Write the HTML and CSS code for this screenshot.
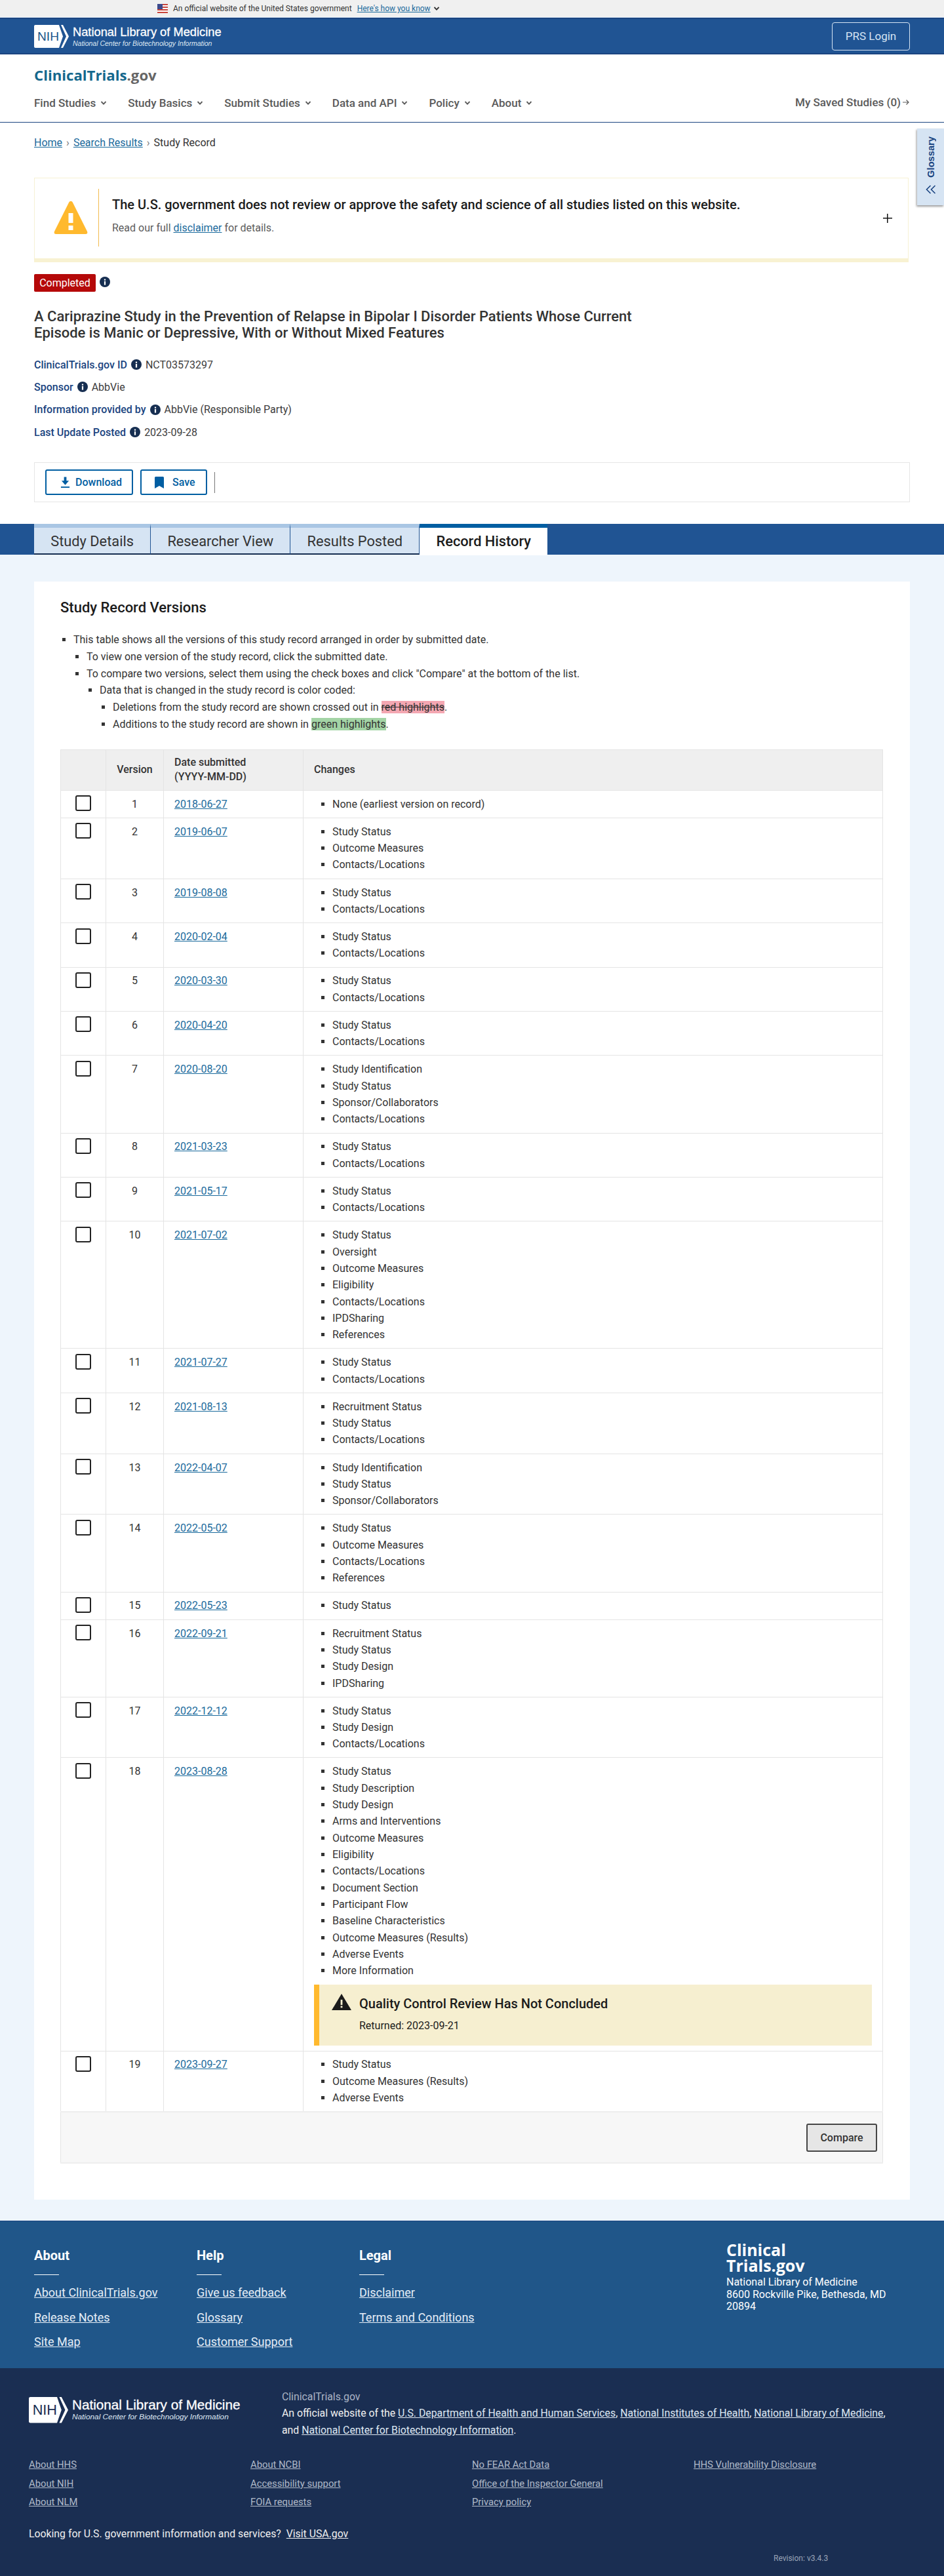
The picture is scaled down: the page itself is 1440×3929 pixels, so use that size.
FILE: index.html
```html
<!DOCTYPE html>
<html lang="en">
<head>
    <meta charset="UTF-8">
    <title>Record History | ClinicalTrials.gov</title>
    <link rel="stylesheet" href="styles.css">
</head>
<body>
    <svg class="sprite" width="0" height="0">
        <symbol id="info" viewBox="0 0 16 16"><circle cx="8" cy="8" r="8" fill="#162e51"/><rect x="6.900" y="7" width="2.200" height="5.600" fill="#fff"/><rect x="6.900" y="3.600" width="2.200" height="2.200" fill="#fff"/></symbol>
        <symbol id="caret" viewBox="0 0 10 10"><path d="M1.500 3l3.500 3.600L8.500 3" fill="none" stroke="currentColor" stroke-width="1.800"/></symbol>
    </svg>

    <div class="gov-banner">
        <svg class="flag" viewBox="0 0 16 14"><rect width="16" height="14" fill="#fff"/><path d="M0 0h16v2H0zM0 4h16v2H0zM0 8h16v2H0zM0 12h16v2H0z" fill="#c8443c"/><rect width="8" height="8" fill="#3c4a8c"/></svg>
        <span>An official website of the United States government</span>
        <a href="#">Here's how you know</a>
        <svg class="caret"><use href="#caret"/></svg>
    </div>

    <header class="nlm-header">
        <a class="nlm-logo" href="#">
            <svg class="nih-mark" viewBox="0 0 53 35"><path d="M2 0h36l6 17.500L38 35H2a2 2 0 0 1-2-2V2a2 2 0 0 1 2-2z" fill="#fff"/><path d="M41 0h3l9 17.500L44 35h-3l8-17.500z" fill="#fff"/><text x="5" y="24" font-family="Liberation Sans" font-size="19" fill="#20558a" textLength="33" lengthAdjust="spacingAndGlyphs">NIH</text></svg>
            <span class="nlm-name"><b>National Library of Medicine</b><i>National Center for Biotechnology Information</i></span>
        </a>
        <a class="prs-login" href="#">PRS Login</a>
    </header>

    <div class="site-header">
        <div class="site-logo">ClinicalTrials<span>.gov</span></div>
        <nav class="main-nav">
            <a href="#">Find Studies <svg class="caret"><use href="#caret"/></svg></a>
            <a href="#">Study Basics <svg class="caret"><use href="#caret"/></svg></a>
            <a href="#">Submit Studies <svg class="caret"><use href="#caret"/></svg></a>
            <a href="#">Data and API <svg class="caret"><use href="#caret"/></svg></a>
            <a href="#">Policy <svg class="caret"><use href="#caret"/></svg></a>
            <a href="#">About <svg class="caret"><use href="#caret"/></svg></a>
            <a class="saved" href="#">My Saved Studies (0)<svg viewBox="0 0 12 12"><path d="M1 6h9M6.500 2.500L10 6l-3.500 3.500" fill="none" stroke="currentColor" stroke-width="1.200"/></svg></a>
        </nav>
    </div>

    <button class="glossary">
        <span>Glossary</span>
        <svg viewBox="0 0 16 14"><path d="M7.500 1L1.500 7l6 6M14.500 1l-6 6 6 6" fill="none" stroke="#1a4480" stroke-width="1.600"/></svg>
    </button>

    <main class="top-section">
        <div class="breadcrumb">
            <a href="#">Home</a><i>›</i><a href="#">Search Results</a><i>›</i><span>Study Record</span>
        </div>

        <section class="disclaimer">
            <svg class="warn-icon" viewBox="0 0 52 52"><path d="M23 3c1.500-3 4.500-3 6 0l22 44c1 2.500 0 4-2.500 4h-45C1 51 0 49.500 1 47z" fill="#ffb92e"/><rect x="22.500" y="19" width="7" height="15" fill="#fff"/><rect x="22.500" y="38" width="7" height="7" fill="#fff"/></svg>
            <div class="disclaimer-text">
                <h3>The U.S. government does not review or approve the safety and science of all studies listed on this website.</h3>
                <p>Read our full <a href="#">disclaimer</a> for details.</p>
            </div>
            <span class="plus"></span>
        </section>

        <div class="status-row">
            <span class="status">Completed</span>
            <svg class="info"><use href="#info"/></svg>
        </div>

        <h1>A Cariprazine Study in the Prevention of Relapse in Bipolar I Disorder Patients Whose Current Episode is Manic or Depressive, With or Without Mixed Features</h1>

        <dl class="meta">
            <div><dt>ClinicalTrials.gov ID</dt><svg class="info"><use href="#info"/></svg><dd>NCT03573297</dd></div>
            <div><dt>Sponsor</dt><svg class="info"><use href="#info"/></svg><dd>AbbVie</dd></div>
            <div><dt>Information provided by</dt><svg class="info"><use href="#info"/></svg><dd>AbbVie (Responsible Party)</dd></div>
            <div><dt>Last Update Posted</dt><svg class="info"><use href="#info"/></svg><dd>2023-09-28</dd></div>
        </dl>

        <div class="toolbar">
            <button class="tool-btn download">
                <svg viewBox="0 0 16 18"><path d="M6 0h4v6h4l-6 7-6-7h4z" fill="#005ea2"/><rect x="1" y="15.500" width="14" height="2" fill="#005ea2"/></svg>
                Download
            </button>
            <button class="tool-btn save">
                <svg viewBox="0 0 14 18"><path d="M0 1.500A1.500 1.500 0 0 1 1.500 0h11A1.500 1.500 0 0 1 14 1.500V18l-7-4-7 4z" fill="#005ea2"/></svg>
                Save
            </button>
            <span class="tool-sep"></span>
        </div>
    </main>

    <div class="tab-band">
        <a class="tab" href="#">Study Details</a>
        <a class="tab" href="#">Researcher View</a>
        <a class="tab" href="#">Results Posted</a>
        <a class="tab active" href="#">Record History</a>
    </div>

    <div class="content-bg">
        <section class="card">
            <h2>Study Record Versions</h2>
            <ul class="help-list">
                <li>This table shows all the versions of this study record arranged in order by submitted date.
                    <ul>
                        <li>To view one version of the study record, click the submitted date.</li>
                        <li>To compare two versions, select them using the check boxes and click "Compare" at the bottom of the list.
                            <ul>
                                <li>Data that is changed in the study record is color coded:
                                    <ul>
                                        <li>Deletions from the study record are shown crossed out in <del>red highlights</del>.</li>
                                        <li>Additions to the study record are shown in <ins>green highlights</ins>.</li>
                                    </ul>
                                </li>
                            </ul>
                        </li>
                    </ul>
                </li>
            </ul>

            <table class="versions">
                <colgroup><col class="c-check"><col class="c-ver"><col class="c-date"><col class="c-changes"></colgroup>
                <thead>
                    <tr><th></th><th class="center">Version</th><th>Date submitted<br>(YYYY-MM-DD)</th><th>Changes</th></tr>
                </thead>
                <tbody>
                    <tr><td class="check"><input type="checkbox"></td><td class="center">1</td><td><a href="#">2018-06-27</a></td><td><ul><li>None (earliest version on record)</li></ul></td></tr>
                    <tr><td class="check"><input type="checkbox"></td><td class="center">2</td><td><a href="#">2019-06-07</a></td><td><ul><li>Study Status</li><li>Outcome Measures</li><li>Contacts/Locations</li></ul></td></tr>
                    <tr><td class="check"><input type="checkbox"></td><td class="center">3</td><td><a href="#">2019-08-08</a></td><td><ul><li>Study Status</li><li>Contacts/Locations</li></ul></td></tr>
                    <tr><td class="check"><input type="checkbox"></td><td class="center">4</td><td><a href="#">2020-02-04</a></td><td><ul><li>Study Status</li><li>Contacts/Locations</li></ul></td></tr>
                    <tr><td class="check"><input type="checkbox"></td><td class="center">5</td><td><a href="#">2020-03-30</a></td><td><ul><li>Study Status</li><li>Contacts/Locations</li></ul></td></tr>
                    <tr><td class="check"><input type="checkbox"></td><td class="center">6</td><td><a href="#">2020-04-20</a></td><td><ul><li>Study Status</li><li>Contacts/Locations</li></ul></td></tr>
                    <tr><td class="check"><input type="checkbox"></td><td class="center">7</td><td><a href="#">2020-08-20</a></td><td><ul><li>Study Identification</li><li>Study Status</li><li>Sponsor/Collaborators</li><li>Contacts/Locations</li></ul></td></tr>
                    <tr><td class="check"><input type="checkbox"></td><td class="center">8</td><td><a href="#">2021-03-23</a></td><td><ul><li>Study Status</li><li>Contacts/Locations</li></ul></td></tr>
                    <tr><td class="check"><input type="checkbox"></td><td class="center">9</td><td><a href="#">2021-05-17</a></td><td><ul><li>Study Status</li><li>Contacts/Locations</li></ul></td></tr>
                    <tr><td class="check"><input type="checkbox"></td><td class="center">10</td><td><a href="#">2021-07-02</a></td><td><ul><li>Study Status</li><li>Oversight</li><li>Outcome Measures</li><li>Eligibility</li><li>Contacts/Locations</li><li>IPDSharing</li><li>References</li></ul></td></tr>
                    <tr><td class="check"><input type="checkbox"></td><td class="center">11</td><td><a href="#">2021-07-27</a></td><td><ul><li>Study Status</li><li>Contacts/Locations</li></ul></td></tr>
                    <tr><td class="check"><input type="checkbox"></td><td class="center">12</td><td><a href="#">2021-08-13</a></td><td><ul><li>Recruitment Status</li><li>Study Status</li><li>Contacts/Locations</li></ul></td></tr>
                    <tr><td class="check"><input type="checkbox"></td><td class="center">13</td><td><a href="#">2022-04-07</a></td><td><ul><li>Study Identification</li><li>Study Status</li><li>Sponsor/Collaborators</li></ul></td></tr>
                    <tr><td class="check"><input type="checkbox"></td><td class="center">14</td><td><a href="#">2022-05-02</a></td><td><ul><li>Study Status</li><li>Outcome Measures</li><li>Contacts/Locations</li><li>References</li></ul></td></tr>
                    <tr><td class="check"><input type="checkbox"></td><td class="center">15</td><td><a href="#">2022-05-23</a></td><td><ul><li>Study Status</li></ul></td></tr>
                    <tr><td class="check"><input type="checkbox"></td><td class="center">16</td><td><a href="#">2022-09-21</a></td><td><ul><li>Recruitment Status</li><li>Study Status</li><li>Study Design</li><li>IPDSharing</li></ul></td></tr>
                    <tr><td class="check"><input type="checkbox"></td><td class="center">17</td><td><a href="#">2022-12-12</a></td><td><ul><li>Study Status</li><li>Study Design</li><li>Contacts/Locations</li></ul></td></tr>
                    <tr><td class="check"><input type="checkbox"></td><td class="center">18</td><td><a href="#">2023-08-28</a></td><td>
                        <ul><li>Study Status</li><li>Study Description</li><li>Study Design</li><li>Arms and Interventions</li><li>Outcome Measures</li><li>Eligibility</li><li>Contacts/Locations</li><li>Document Section</li><li>Participant Flow</li><li>Baseline Characteristics</li><li>Outcome Measures (Results)</li><li>Adverse Events</li><li>More Information</li></ul>
                        <div class="qc-box">
                            <svg viewBox="0 0 30 25"><path d="M15 0l15 25H0z" fill="#1b1b1b"/><rect x="13.600" y="9" width="2.800" height="8" fill="#f6efd0"/><rect x="13.600" y="18.500" width="2.800" height="2.800" fill="#f6efd0"/></svg>
                            <div>
                                <h4>Quality Control Review Has Not Concluded</h4>
                                <p>Returned: 2023-09-21</p>
                            </div>
                        </div>
                    </td></tr>
                    <tr><td class="check"><input type="checkbox"></td><td class="center">19</td><td><a href="#">2023-09-27</a></td><td><ul><li>Study Status</li><li>Outcome Measures (Results)</li><li>Adverse Events</li></ul></td></tr>
                </tbody>
                <tfoot>
                    <tr><td colspan="4"><button class="compare">Compare</button></td></tr>
                </tfoot>
            </table>
        </section>
    </div>

    <footer>
        <div class="footer-top">
            <div class="foot-col">
                <h5>About</h5>
                <a href="#">About ClinicalTrials.gov</a>
                <a href="#">Release Notes</a>
                <a href="#">Site Map</a>
            </div>
            <div class="foot-col">
                <h5>Help</h5>
                <a href="#">Give us feedback</a>
                <a href="#">Glossary</a>
                <a href="#">Customer Support</a>
            </div>
            <div class="foot-col">
                <h5>Legal</h5>
                <a href="#">Disclaimer</a>
                <a href="#">Terms and Conditions</a>
            </div>
            <div class="foot-address">
                <div class="foot-logo">Clinical<br>Trials.gov</div>
                <p>National Library of Medicine<br>8600 Rockville Pike, Bethesda, MD<br>20894</p>
            </div>
        </div>

        <div class="footer-bottom">
            <div class="official">
                <a class="nlm-logo" href="#">
                    <svg class="nih-mark" viewBox="0 0 53 35"><path d="M2 0h36l6 17.500L38 35H2a2 2 0 0 1-2-2V2a2 2 0 0 1 2-2z" fill="#fff"/><path d="M41 0h3l9 17.500L44 35h-3l8-17.500z" fill="#fff"/><text x="5" y="24" font-family="Liberation Sans" font-size="19" fill="#1a2e52" textLength="33" lengthAdjust="spacingAndGlyphs">NIH</text></svg>
                    <span class="nlm-name"><b>National Library of Medicine</b><i>National Center for Biotechnology Information</i></span>
                </a>
                <div class="official-text">
                    <div class="official-name">ClinicalTrials.gov</div>
                    <p>An official website of the <a href="#">U.S. Department of Health and Human Services</a>, <a href="#">National Institutes of Health</a>, <a href="#">National Library of Medicine</a>, and <a href="#">National Center for Biotechnology Information</a>.</p>
                </div>
            </div>
            <div class="agency-links">
                <div><a href="#">About HHS</a><a href="#">About NIH</a><a href="#">About NLM</a></div>
                <div><a href="#">About NCBI</a><a href="#">Accessibility support</a><a href="#">FOIA requests</a></div>
                <div><a href="#">No FEAR Act Data</a><a href="#">Office of the Inspector General</a><a href="#">Privacy policy</a></div>
                <div><a href="#">HHS Vulnerability Disclosure</a></div>
            </div>
            <div class="usa-line">Looking for U.S. government information and services? <a href="#">Visit USA.gov</a></div>
            <div class="revision">Revision: v3.4.3</div>
        </div>
    </footer>
</body>
</html>
```

FILE: styles.css
```css
* {
    box-sizing: border-box;
}

body {
    margin: 0;
    font-family: 'Roboto', sans-serif;
    font-size: 16px;
    color: #333;
    background: #fff;
    position: relative;
}

a {
    color: #1a6a9c;
}

.sprite {
    position: absolute;
}

.caret {
    width: 10px;
    height: 10px;
}

.info {
    width: 16px;
    height: 16px;
    flex: none;
}

/* Top banner */
.gov-banner {
    height: 27px;
    background: #f0f0f0;
    border-bottom: 1px solid #d6e4f3;
    display: flex;
    align-items: center;
    padding-left: 240px;
    font-size: 12px;
    color: #333;
}

.gov-banner .flag {
    width: 16px;
    height: 14px;
    margin-right: 8px;
}

.gov-banner a {
    margin-left: 8px;
    margin-right: 4px;
}

/* NLM header */
.nlm-header {
    height: 56px;
    background: #205493;
    border-top: 2px solid #1a4480;
    border-bottom: 2px solid #1a4480;
    display: flex;
    justify-content: space-between;
    align-items: center;
    padding: 0 52px;
}

.nlm-logo {
    display: flex;
    align-items: center;
    gap: 6px;
    color: #fff;
    text-decoration: none;
}

.nih-mark {
    width: 53px;
    height: 35px;
    flex: none;
}

.nlm-name {
    display: flex;
    flex-direction: column;
    font-family: 'Liberation Sans', sans-serif;
}

.nlm-name b {
    font-size: 18.300px;
    font-weight: 400;
    line-height: 22px;
    -webkit-text-stroke: 0.3px #fff;
}

.nlm-name i {
    font-size: 10.500px;
    line-height: 13px;
    color: #dfe8f2;
}

.prs-login {
    width: 119px;
    height: 43px;
    border: 1px solid #d6e4f3;
    border-radius: 4px;
    display: flex;
    align-items: center;
    justify-content: center;
    color: #d6e4f3;
    font-size: 17px;
    text-decoration: none;
}

/* Site header */
.site-header {
    height: 104px;
    padding: 16px 52px 0;
    border-bottom: 1px solid #1a4480;
}

.site-logo {
    font-family: 'Open Sans', sans-serif;
    font-weight: 700;
    font-size: 22.200px;
    line-height: 32px;
    color: #15688d;
}

.site-logo span {
    color: #666;
    font-weight: 700;
}

.main-nav {
    display: flex;
    gap: 32px;
    margin-top: 15px;
    align-items: center;
}

.main-nav a {
    color: #5a5a5a;
    font-size: 17px;
    font-weight: 500;
    text-decoration: none;
    display: flex;
    align-items: center;
    gap: 7px;
    line-height: 22px;
}

.main-nav .saved {
    margin-left: auto;
    gap: 2px;
    margin-top: -2px;
}

.main-nav .saved svg {
    width: 12px;
    height: 12px;
}

/* Glossary flyout */
.glossary {
    position: absolute;
    top: 196px;
    right: 0;
    width: 41px;
    height: 117px;
    padding: 12px 0 0;
    border: none;
    background: #d6e4f3;
    box-shadow: -1px 2px 3px rgba(0, 0, 0, 0.4);
    display: flex;
    flex-direction: column;
    align-items: center;
    justify-content: flex-start;
    gap: 11px;
}

.glossary span {
    writing-mode: vertical-rl;
    transform: rotate(180deg);
    font-family: 'Liberation Sans', sans-serif;
    font-weight: 700;
    font-size: 14.700px;
    color: #1a4480;
}

.glossary svg {
    width: 16px;
    height: 14px;
}

/* Top section */
.top-section {
    padding: 0 52px;
    height: 612px;
}

.breadcrumb {
    padding-top: 20px;
    line-height: 22px;
    color: #333;
    display: flex;
    align-items: center;
}

.breadcrumb i {
    font-style: normal;
    margin: 0 6px;
    color: #777;
}

.disclaimer {
    margin-top: 42px;
    width: 1334px;
    height: 129px;
    border: 1px solid #f6f1d4;
    border-bottom: 6px solid #f8f2d2;
    display: flex;
    align-items: center;
    padding-left: 29px;
    padding-bottom: 2px;
    position: relative;
}

.warn-icon {
    width: 52px;
    height: 52px;
    margin-right: 16px;
    flex: none;
}

.disclaimer-text {
    border-left: 1px solid #f2bb4f;
    height: 88px;
    padding-left: 20px;
    padding-top: 11px;
}

.disclaimer-text h3 {
    margin: 0;
    font-size: 20px;
    font-weight: 500;
    line-height: 26px;
    color: #1b1b1b;
}

.disclaimer-text p {
    margin: 11px 0 0;
    line-height: 24px;
    color: #5c5c5c;
}

.plus {
    position: absolute;
    left: 1294px;
    top: 54px;
    width: 14px;
    height: 14px;
    background: linear-gradient(#111, #111) center / 14px 1.500px no-repeat, linear-gradient(#111, #111) center / 1.500px 14px no-repeat;
}

.status-row {
    margin-top: 18px;
    display: flex;
    align-items: flex-start;
    gap: 6px;
}

.status {
    background: #b50909;
    color: #fff;
    height: 27px;
    width: 94px;
    border-radius: 2px;
    display: flex;
    align-items: center;
    justify-content: center;
}

.status-row .info {
    margin-top: 4px;
}

h1 {
    margin: 25px 0 0;
    width: 960px;
    font-size: 22px;
    font-weight: 500;
    line-height: 25px;
    color: #333;
}

.meta {
    margin: 19px 0 0;
}

.meta div {
    display: flex;
    align-items: center;
    gap: 6px;
    height: 34.300px;
}

.meta dt {
    color: #1a4480;
    font-weight: 500;
}

.meta dd {
    margin: 0;
    color: #3d3d3d;
}

.toolbar {
    margin-top: 29px;
    height: 61px;
    border: 1px solid #e6e6e6;
    display: flex;
    align-items: center;
    padding-left: 16px;
    gap: 11px;
}

.tool-btn {
    height: 39px;
    background: #fff;
    border: 2px solid #005ea2;
    border-radius: 3px;
    color: #005ea2;
    font: 500 16px 'Roboto', sans-serif;
    display: flex;
    align-items: center;
}

.tool-btn svg {
    height: 18px;
}

.tool-btn.download {
    width: 134px;
    padding-left: 21px;
    gap: 8px;
}

.tool-btn.download svg {
    width: 15px;
}

.tool-btn.save {
    width: 102px;
    padding-left: 20px;
    gap: 13px;
}

.tool-btn.save svg {
    width: 14px;
}

.tool-sep {
    width: 1px;
    height: 32px;
    background: #777;
}

/* Tabs */
.tab-band {
    height: 47px;
    background: #205493;
    padding-left: 52px;
    display: flex;
}

.tab {
    height: 47px;
    background: #d6e4f3;
    border-top: 6px solid #a9c6e4;
    border-bottom: 2px solid #162e51;
    border-right: 1px solid #205493;
    display: flex;
    align-items: center;
    padding: 1px 25.200px 0;
    font-size: 21.800px;
    color: #333;
    text-decoration: none;
}

.tab.active {
    background: #fff;
    border-top-color: #005ea2;
    border-bottom: none;
    border-right: none;
    font-weight: 500;
    color: #1b1b1b;
    height: 48px;
    padding-bottom: 3px;
    position: relative;
}

/* Card */
.content-bg {
    background: #eef5fc;
    padding: 41px 52px 32px;
}

.card {
    background: #fff;
    padding: 24px 41px 55px 40px;
}

.card h2 {
    margin: 0;
    font-size: 22px;
    font-weight: 500;
    line-height: 32px;
    color: #1b1b1b;
}

.help-list, .help-list ul {
    list-style: square;
    margin: 0;
    padding-left: 20px;
}

.help-list {
    margin-top: 20px;
}

.help-list li {
    line-height: 25.800px;
}

.help-list del {
    background: #f4a7b2;
}

.help-list ins {
    background: #a3d4a5;
    text-decoration: none;
}

/* Versions table */
.versions {
    margin-top: 25px;
    width: 100%;
    border-collapse: collapse;
    table-layout: fixed;
}

.c-check { width: 69px; }
.c-ver { width: 88px; }
.c-date { width: 213px; }

.versions th {
    background: #efefef;
    border: 1px solid #e4e4e4;
    border-bottom: none;
    height: 62px;
    padding: 0 16px;
    text-align: left;
    font-weight: 500;
    line-height: 22px;
    color: #333;
}

.versions td {
    border: 1px solid #e4e4e4;
    padding: 7.900px 16px;
    vertical-align: top;
    line-height: 25.330px;
}

.versions .center {
    text-align: center;
}

.versions td.check {
    padding-top: 7.500px;
    padding-left: 22px;
}

.versions input {
    appearance: none;
    display: block;
    margin: 0;
    width: 24px;
    height: 24px;
    border: 2px solid #222;
    border-radius: 3px;
    background: #fff;
}

.versions td ul {
    list-style: square;
    margin: 0;
    padding-left: 28px;
}

.qc-box {
    margin-top: 8px;
    height: 93px;
    background: #f6efd0;
    border-left: 8px solid #ffb92e;
    padding: 13px 0 0 19px;
    display: flex;
    gap: 12px;
    color: #1b1b1b;
}

.qc-box svg {
    width: 30px;
    height: 25px;
    margin-top: 1px;
    flex: none;
}

.qc-box h4 {
    margin: 0;
    font-size: 20px;
    font-weight: 500;
    line-height: 32px;
}

.qc-box p {
    margin: 5px 0 0;
    line-height: 26px;
}

.versions tfoot td {
    background: #f7f7f7;
    border-top: 2px solid #eee;
    border-bottom: 2px solid #eee;
    height: 78px;
    padding: 0 8px 0 0;
    vertical-align: middle;
    text-align: right;
}

.compare {
    width: 108px;
    height: 43px;
    background: #e6e6e6;
    border: 2px solid #454545;
    border-radius: 3px;
    font: 500 16px 'Roboto', sans-serif;
    color: #333;
}

/* Footer */
.footer-top {
    height: 225px;
    background: #205689;
    border-top: 1px solid #1a4480;
    padding: 38px 52px 0;
    display: flex;
    color: #fff;
}

.foot-col {
    width: 248px;
    display: flex;
    flex-direction: column;
    align-items: flex-start;
}

.foot-col h5 {
    margin: 0 0 8px;
    font-size: 20px;
    font-weight: 700;
    line-height: 28px;
    padding-bottom: 16px;
    width: 100%;
    background: linear-gradient(#fff, #fff) left bottom / 38px 1px no-repeat;
}

.foot-col a {
    color: #e6eef7;
    font-size: 18px;
    line-height: 37.500px;
}

.foot-address {
    margin-left: 312px;
    width: 280px;
    margin-top: -7px;
}

.foot-logo {
    font-family: 'Open Sans', sans-serif;
    font-weight: 700;
    font-size: 25px;
    line-height: 24px;
}

.foot-address p {
    margin: 5px 0 0;
    line-height: 18.500px;
}

.footer-bottom {
    height: 316.800px;
    background: #1a2e52;
    padding: 32px 44px 0 44px;
    position: relative;
    color: #fff;
}

.official {
    display: flex;
}

.official .nlm-logo {
    margin-top: 12px;
    height: 39px;
    width: 386px;
    flex: none;
}

.official .nih-mark {
    width: 60px;
    height: 39.600px;
}

.official .nlm-name b {
    font-size: 20.700px;
}

.official .nlm-name i {
    font-size: 11.800px;
    line-height: 15px;
}

.official-text {
    width: 940px;
    font-size: 15.800px;
}

.official-name {
    color: #aab4c4;
    line-height: 24px;
}

.official-text p {
    margin: 0;
    line-height: 26px;
    color: #f0f0f0;
}

.official-text a {
    color: #dfe8f2;
}

.agency-links {
    display: flex;
    margin-top: 25px;
}

.agency-links div {
    width: 342px;
    display: flex;
    flex-direction: column;
    align-items: flex-start;
}

.agency-links a {
    color: #b0bac9;
    font-size: 14.800px;
    line-height: 28.500px;
}

.usa-line {
    margin-top: 22px;
    line-height: 24px;
    color: #f0f0f0;
    font-size: 15.800px;
}

.usa-line a {
    color: #f0f0f0;
    margin-left: 4px;
}

.revision {
    position: absolute;
    left: 1180px;
    top: 283px;
    font-size: 12px;
    color: #9aa5b8;
}
```
